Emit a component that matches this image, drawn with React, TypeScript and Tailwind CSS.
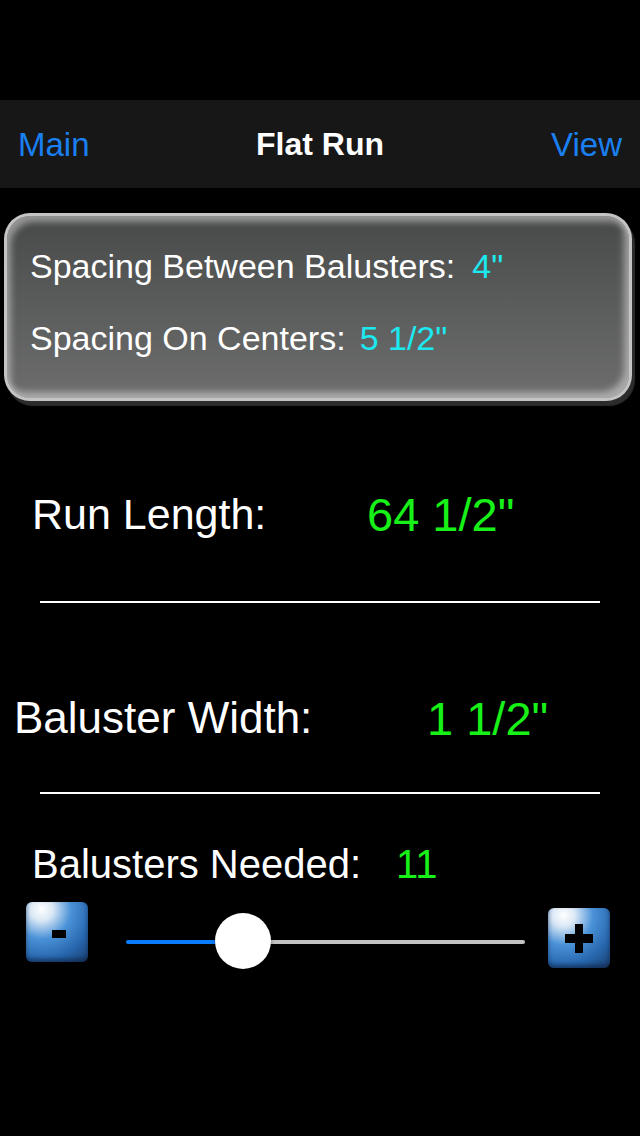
import React from "react";

const font = { fontFamily: '"Liberation Sans", Arial, Helvetica, sans-serif' };

function StepButton({ kind }: { kind: "minus" | "plus" }) {
  return (
    <div className="relative flex h-[60px] w-[62px] items-center justify-center rounded-[6px] bg-[radial-gradient(circle_at_25%_12%,#ffffff_0%,#dbe8f5_16%,#4a92d8_42%,#2766ad_72%,#1c3d6c_100%)] shadow-[inset_0_-3px_4px_rgba(10,30,60,0.6)]">
      {kind === "minus" ? (
        <div className="ml-[3px] mt-[4px] h-[8px] w-[14px] bg-black" />
      ) : (
        <div className="relative h-[29px] w-[28px]">
          <div className="absolute left-0 top-[10px] h-[9px] w-[28px] bg-black" />
          <div className="absolute left-[10px] top-0 h-[29px] w-[8px] bg-black" />
        </div>
      )}
    </div>
  );
}

export default function App() {
  return (
    <div className="flex h-[1136px] w-[640px] flex-col overflow-hidden bg-black text-white" style={font}>
      {/* status bar area */}
      <div className="h-[100px]" />

      {/* nav bar */}
      <div className="grid h-[88px] grid-cols-[1fr_auto_1fr] items-center bg-[#171717] px-[18px] text-[33px] leading-none">
        <span className="text-[#1a80f2]">Main</span>
        <span className="text-[32px] font-bold">Flat Run</span>
        <span className="justify-self-end text-[#1a80f2]">View</span>
      </div>

      {/* summary card */}
      <div className="ml-[4px] mt-[25px] h-[188px] w-[628px] rounded-[26px] bg-[#c4c4c4] p-[3px] shadow-[3px_5px_1px_#2c2c2c]">
        <div className="flex h-full flex-col rounded-[23px] bg-[linear-gradient(to_bottom,#484949,#5b5c5c_50%,#6d6d6d)] px-[23px] pt-[30px] text-[34px] leading-none shadow-[inset_4px_6px_6px_rgba(210,210,210,0.55),inset_-5px_-6px_7px_rgba(215,215,215,0.6)]">
          <div className="flex h-[40px] items-center">
            <span>Spacing Between Balusters:</span>
            <span className="ml-[17px] text-[#1ce8f0]">4"</span>
          </div>
          <div className="mt-[32px] flex h-[40px] items-center">
            <span>Spacing On Centers:</span>
            <span className="ml-[14px] text-[#1ce8f0]">5 1/2"</span>
          </div>
        </div>
      </div>

      {/* run length */}
      <div className="mt-[88px] flex h-[50px] items-center leading-none">
        <span className="ml-[32px] w-[335px] text-[43px]">Run Length:</span>
        <span className="text-[47px] text-[#17f117]">64 1/2"</span>
      </div>

      <div className="mx-[40px] mt-[62px] h-[2px] bg-white" />

      {/* baluster width */}
      <div className="mt-[90px] flex h-[50px] items-center leading-none">
        <span className="ml-[14px] w-[413px] text-[44px]">Baluster Width:</span>
        <span className="text-[47px] text-[#17f117]">1 1/2"</span>
      </div>

      <div className="mx-[40px] mt-[49px] h-[2px] bg-white" />

      {/* balusters needed */}
      <div className="mt-[50px] flex h-[40px] items-center text-[40px] leading-none">
        <span className="ml-[32px] w-[364px]">Balusters Needed:</span>
        <span className="text-[#17f117]">11</span>
      </div>

      {/* stepper slider */}
      <div className="flex items-start">
        <div className="ml-[26px] mt-[18px]">
          <StepButton kind="minus" />
        </div>
        <div className="relative ml-[38px] mt-[29px] h-[56px] w-[399px]">
          <div className="absolute left-0 right-0 top-[27px] flex h-[4px]">
            <div className="w-[100px] rounded-l-full bg-[#0a7cff]" />
            <div className="flex-1 rounded-r-full bg-[#c2c2c2]" />
          </div>
          <div className="absolute left-[89px] top-0 h-[56px] w-[56px] rounded-full bg-white shadow-[0_2px_4px_rgba(0,0,0,0.4)]" />
        </div>
        <div className="ml-[23px] mt-[24px]">
          <StepButton kind="plus" />
        </div>
      </div>
    </div>
  );
}
